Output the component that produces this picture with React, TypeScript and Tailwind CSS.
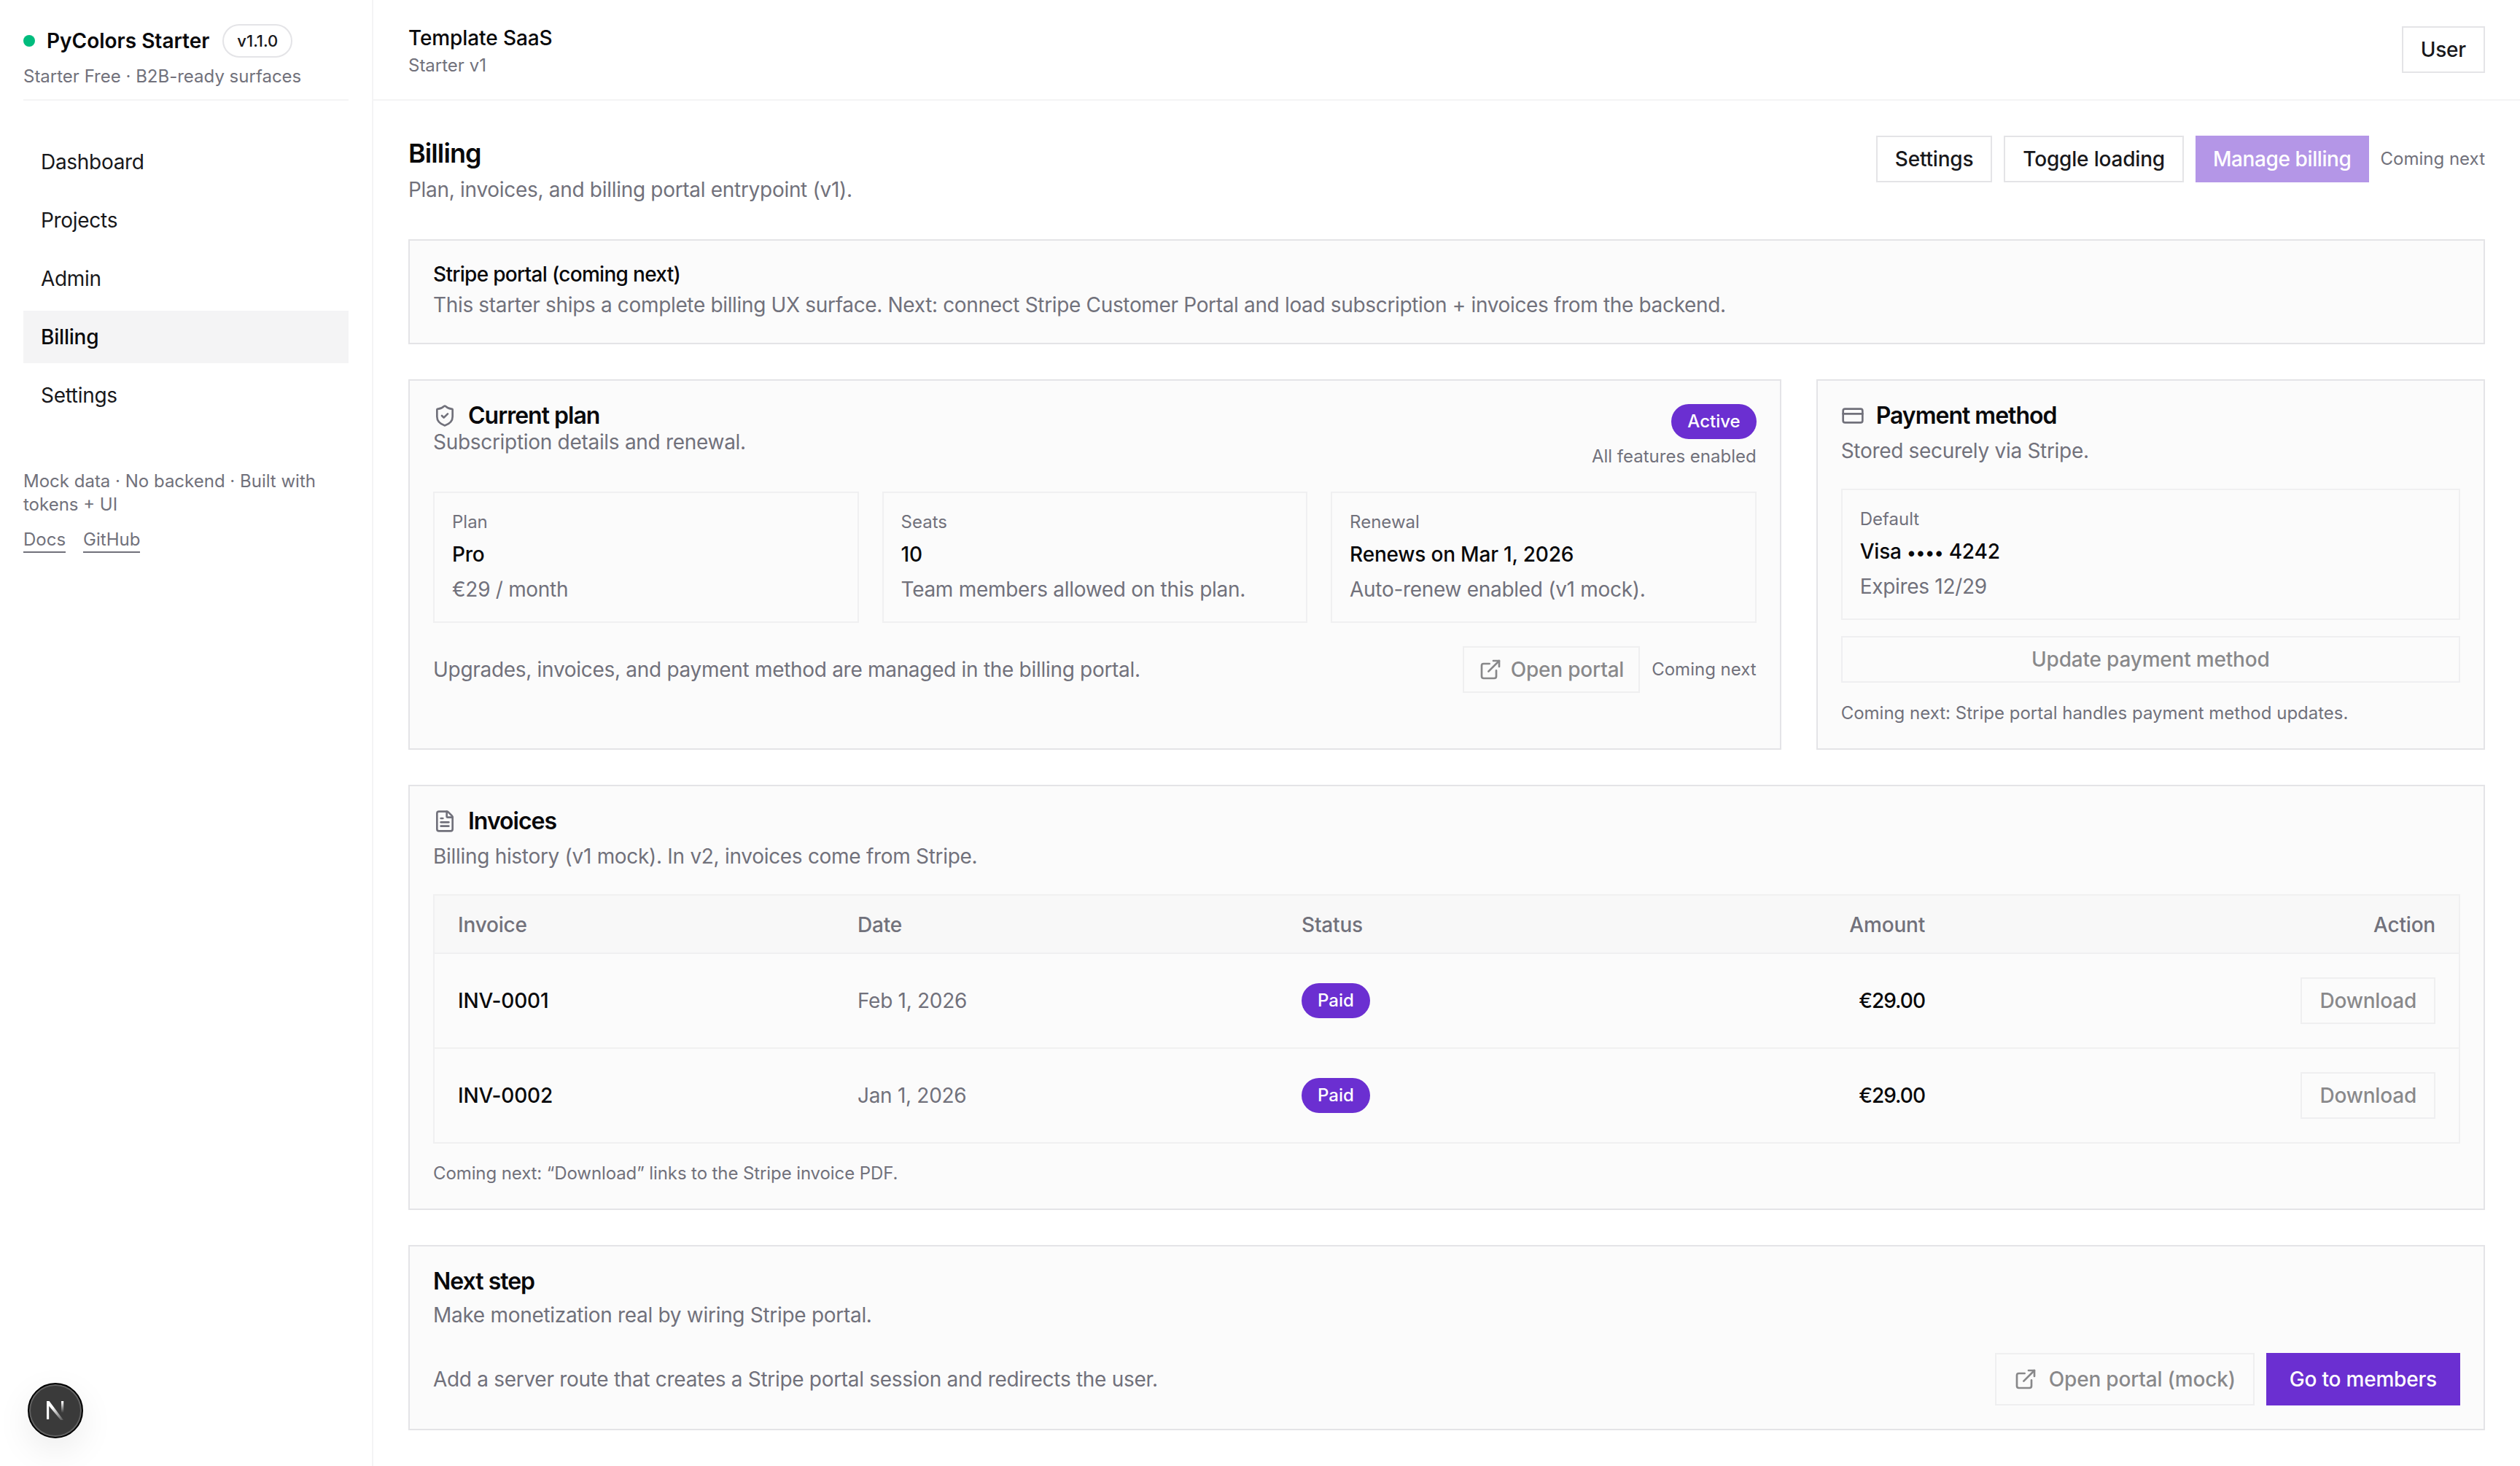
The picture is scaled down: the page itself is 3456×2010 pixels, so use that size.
import React from 'react';
import { CreditCard, ExternalLink, FileText, ShieldCheck } from 'lucide-react';

const navItems = ['Dashboard', 'Projects', 'Admin', 'Billing', 'Settings'];

const planStats = [
    { label: 'Plan', value: 'Pro', detail: '€29 / month' },
    { label: 'Seats', value: '10', detail: 'Team members allowed on this plan.' },
    { label: 'Renewal', value: 'Renews on Mar 1, 2026', detail: 'Auto-renew enabled (v1 mock).' },
];

const invoices = [
    { id: 'INV-0001', date: 'Feb 1, 2026', status: 'Paid', amount: '€29.00' },
    { id: 'INV-0002', date: 'Jan 1, 2026', status: 'Paid', amount: '€29.00' },
];

const Stat = ({ label, value, detail }: { label: string; value: React.ReactNode; detail: string }) => (
    <div className="border-2 border-[#f0f0f1] px-6 pt-6 pb-6">
        <div className="text-2xl text-zinc-500">{label}</div>
        <div className="mt-2 text-[28px] leading-10 font-medium tracking-[-0.2px] text-zinc-950">{value}</div>
        <div className="mt-2 text-[28px] leading-10 tracking-[-0.3px] text-zinc-500">{detail}</div>
    </div>
);

const OutlineButton = ({ children }: { children: React.ReactNode }) => (
    <button className="h-16 border-2 border-zinc-200 bg-white px-6 text-[28px] leading-10 font-medium tracking-[-0.2px] text-zinc-900">
        {children}
    </button>
);

const DisabledButton = ({ children, className }: { children: React.ReactNode; className: string }) => (
    <button className={`flex items-center justify-center border-2 border-zinc-200 text-[28px] leading-10 font-medium tracking-[-0.2px] text-zinc-900 opacity-50 ${className}`}>
        {children}
    </button>
);

const Pill = ({ children }: { children: React.ReactNode }) => (
    <span className="inline-flex h-12 items-center rounded-full bg-[#6b2fd1] px-[22px] text-2xl font-medium text-white">
        {children}
    </span>
);

const CardTitle = ({ icon, children }: { icon?: React.ReactNode; children: React.ReactNode }) => (
    <div className="flex items-center gap-4">
        {icon}
        <h2 className="text-[32px] leading-8 font-semibold tracking-[-1px] text-zinc-950">{children}</h2>
    </div>
);

const NextLogo = () => (
    <svg width="30" height="30" viewBox="0 0 30 30" fill="none">
        <defs>
            <linearGradient id="nDiag" x1="12" y1="10" x2="25" y2="28" gradientUnits="userSpaceOnUse">
                <stop stopColor="#ffffff" />
                <stop offset="1" stopColor="#ffffff" stopOpacity="0.15" />
            </linearGradient>
            <linearGradient id="nStem" x1="24" y1="3" x2="24" y2="18" gradientUnits="userSpaceOnUse">
                <stop stopColor="#ffffff" />
                <stop offset="1" stopColor="#ffffff" stopOpacity="0" />
            </linearGradient>
        </defs>
        <path d="M3 2h3.2v25H3z" fill="#ffffff" />
        <path d="M3 2h3.6L26 28h-3.8L3 5z" fill="url(#nDiag)" />
        <path d="M23 2h3.2v16H23z" fill="url(#nStem)" />
    </svg>
);

export default function App() {
    return (
        <div className="flex min-h-screen bg-white font-['Inter',sans-serif] text-zinc-900 antialiased">
            <aside className="w-[512px] shrink-0 border-r-2 border-zinc-100 px-8 pt-8">
                <div className="border-b-2 border-zinc-100 pb-[15px]">
                    <div className="flex h-12 items-center gap-4">
                        <span className="h-4 w-4 rounded-full bg-emerald-500" />
                        <span className="text-[28px] leading-10 font-semibold text-zinc-950">PyColors Starter</span>
                        <span className="ml-0.5 rounded-full border-2 border-zinc-200 px-[18px] py-1.5 text-[22px] leading-[30px] font-medium text-zinc-900">v1.1.0</span>
                    </div>
                    <div className="mt-[9px] text-2xl text-zinc-500">Starter Free · B2B-ready surfaces</div>
                </div>

                <nav className="mt-12 flex flex-col gap-2">
                    {navItems.map((item) => (
                        <a
                            key={item}
                            href="#"
                            className={
                                item === 'Billing'
                                    ? 'flex h-[72px] items-center bg-zinc-100 px-6 text-[28px] font-medium tracking-[-0.2px] text-zinc-950'
                                    : 'flex h-[72px] items-center px-6 text-[28px] tracking-[-0.3px] text-zinc-900'
                            }
                        >
                            {item}
                        </a>
                    ))}
                </nav>

                <div className="mt-[66px] text-2xl text-zinc-500">
                    <p>Mock data · No backend · Built with tokens + UI</p>
                    <div className="mt-4 flex gap-6">
                        <a href="#" className="border-b-2 border-zinc-500">Docs</a>
                        <a href="#" className="border-b-2 border-zinc-500">GitHub</a>
                    </div>
                </div>
            </aside>

            <div className="min-w-0 flex-1">
                <header className="flex items-center justify-between border-b-2 border-zinc-100 px-12 py-8">
                    <div className="h-[72px]">
                        <div className="text-[28px] leading-10 font-medium tracking-[-0.1px] text-zinc-950">Template SaaS</div>
                        <div className="text-2xl leading-9 text-zinc-500">Starter v1</div>
                    </div>
                    <OutlineButton>User</OutlineButton>
                </header>

                <main className="flex flex-col gap-12 p-12">
                    <div className="flex items-start justify-between">
                        <div>
                            <h1 className="text-4xl leading-12 font-semibold tracking-tight text-zinc-950">Billing</h1>
                            <p className="mt-1.5 text-[28px] leading-10 tracking-[-0.3px] text-zinc-500">Plan, invoices, and billing portal entrypoint (v1).</p>
                        </div>
                        <div className="flex items-center gap-4">
                            <OutlineButton>Settings</OutlineButton>
                            <OutlineButton>Toggle loading</OutlineButton>
                            <button className="h-16 bg-[#6b2fd1] px-6 text-[28px] leading-10 font-medium tracking-[-0.4px] text-white opacity-50">Manage billing</button>
                            <span className="text-2xl text-zinc-500">Coming next</span>
                        </div>
                    </div>

                    <section className="border-2 border-zinc-200 bg-[#fbfbfb] p-8">
                        <div className="text-[28px] leading-7 font-medium tracking-[-0.7px] text-zinc-950">Stripe portal (coming next)</div>
                        <p className="mt-2 text-[28px] leading-10 tracking-[-0.34px] text-zinc-500">
                            This starter ships a complete billing UX surface. Next: connect Stripe Customer Portal and load subscription + invoices from the backend.
                        </p>
                    </section>

                    <div className="grid grid-cols-12 gap-12">
                        <section className="col-span-8 border-2 border-zinc-200 bg-[#fbfbfb] p-8">
                            <div className="flex items-start justify-between">
                                <div>
                                    <CardTitle icon={<ShieldCheck className="h-8 w-8 text-zinc-500" />}>Current plan</CardTitle>
                                    <p className="text-[28px] leading-10 tracking-[-0.3px] text-zinc-500">Subscription details and renewal.</p>
                                </div>
                                <div className="flex flex-col items-end gap-2">
                                    <Pill>Active</Pill>
                                    <span className="text-2xl text-zinc-500">All features enabled</span>
                                </div>
                            </div>

                            <div className="mt-8 grid grid-cols-3 gap-8">
                                {planStats.map((stat) => (
                                    <Stat key={stat.label} {...stat} />
                                ))}
                            </div>

                            <div className="mt-8 flex items-center justify-between">
                                <p className="text-[28px] leading-10 tracking-[-0.3px] text-zinc-500">Upgrades, invoices, and payment method are managed in the billing portal.</p>
                                <div className="flex items-center gap-4">
                                    <DisabledButton className="h-16 gap-3 px-5">
                                        <ExternalLink className="h-8 w-8" />
                                        Open portal
                                    </DisabledButton>
                                    <span className="text-2xl text-zinc-500">Coming next</span>
                                </div>
                            </div>
                        </section>

                        <section className="col-span-4 border-2 border-zinc-200 bg-[#fbfbfb] p-8">
                            <CardTitle icon={<CreditCard className="h-8 w-8 text-zinc-500" />}>Payment method</CardTitle>
                            <p className="mt-3 text-[28px] leading-10 tracking-[-0.3px] text-zinc-500">Stored securely via Stripe.</p>
                            <div className="mt-8">
                                <Stat
                                    label="Default"
                                    value={<>Visa <span className="text-2xl">••••</span> 4242</>}
                                    detail="Expires 12/29"
                                />
                            </div>
                            <DisabledButton className="mt-[22px] h-16 w-full">Update payment method</DisabledButton>
                            <p className="mt-[26px] text-2xl text-zinc-500">Coming next: Stripe portal handles payment method updates.</p>
                        </section>
                    </div>

                    <section className="border-2 border-zinc-200 bg-[#fbfbfb] p-8">
                        <CardTitle icon={<FileText className="h-8 w-8 text-zinc-500" />}>Invoices</CardTitle>
                        <p className="mt-3 text-[28px] leading-10 tracking-[-0.3px] text-zinc-500">Billing history (v1 mock). In v2, invoices come from Stripe.</p>

                        <div className="mt-8 border-2 border-[#f0f0f1]">
                            <div className="grid grid-cols-[548px_609px_480px_375px_1fr] items-center border-b-2 border-[#f0f0f1] bg-[#f8f8f8] px-8 pt-5 pb-[18px] text-[28px] leading-10 font-medium tracking-[-0.2px] text-zinc-500">
                                <div>Invoice</div>
                                <div>Date</div>
                                <div>Status</div>
                                <div className="text-right">Amount</div>
                                <div className="text-right">Action</div>
                            </div>
                            {invoices.map((invoice, index) => (
                                <div
                                    key={invoice.id}
                                    className={`grid grid-cols-[548px_609px_480px_375px_1fr] items-center px-8 py-8 text-[28px] leading-10 ${index === 0 ? 'border-b-2 border-[#f0f0f1]' : ''}`}
                                >
                                    <div className="font-medium tracking-[-0.2px] text-zinc-950">{invoice.id}</div>
                                    <div className="tracking-[-0.3px] text-zinc-500">{invoice.date}</div>
                                    <div><Pill>{invoice.status}</Pill></div>
                                    <div className="text-right font-medium tracking-[-1px] text-zinc-950">{invoice.amount}</div>
                                    <div className="flex justify-end">
                                        <DisabledButton className="h-16 px-6">Download</DisabledButton>
                                    </div>
                                </div>
                            ))}
                        </div>

                        <p className="mt-[25px] text-2xl tracking-[-0.1px] text-zinc-500">Coming next: “Download” links to the Stripe invoice PDF.</p>
                    </section>

                    <section className="border-2 border-zinc-200 bg-[#fbfbfb] p-8">
                        <CardTitle>Next step</CardTitle>
                        <p className="mt-2.5 text-[28px] leading-10 tracking-[-0.3px] text-zinc-500">Make monetization real by wiring Stripe portal.</p>
                        <div className="mt-8 flex items-center justify-between">
                            <p className="text-[28px] leading-10 tracking-[-0.3px] text-zinc-500">Add a server route that creates a Stripe portal session and redirects the user.</p>
                            <div className="flex items-center gap-4">
                                <DisabledButton className="h-[72px] gap-4 px-6">
                                    <ExternalLink className="h-8 w-8" />
                                    Open portal (mock)
                                </DisabledButton>
                                <button className="h-[72px] bg-[#6b2fd1] px-8 text-[28px] leading-10 font-medium tracking-[-0.2px] text-white">Go to members</button>
                            </div>
                        </div>
                    </section>
                </main>
            </div>

            <div className="fixed bottom-[38px] left-[38px] flex h-[76px] w-[76px] items-center justify-center rounded-full border-2 border-black bg-[#3a3a3a] shadow-[inset_0_0_0_2px_rgba(255,255,255,0.2),0_16px_48px_rgba(0,0,0,0.08)]">
                <NextLogo />
            </div>
        </div>
    );
}
